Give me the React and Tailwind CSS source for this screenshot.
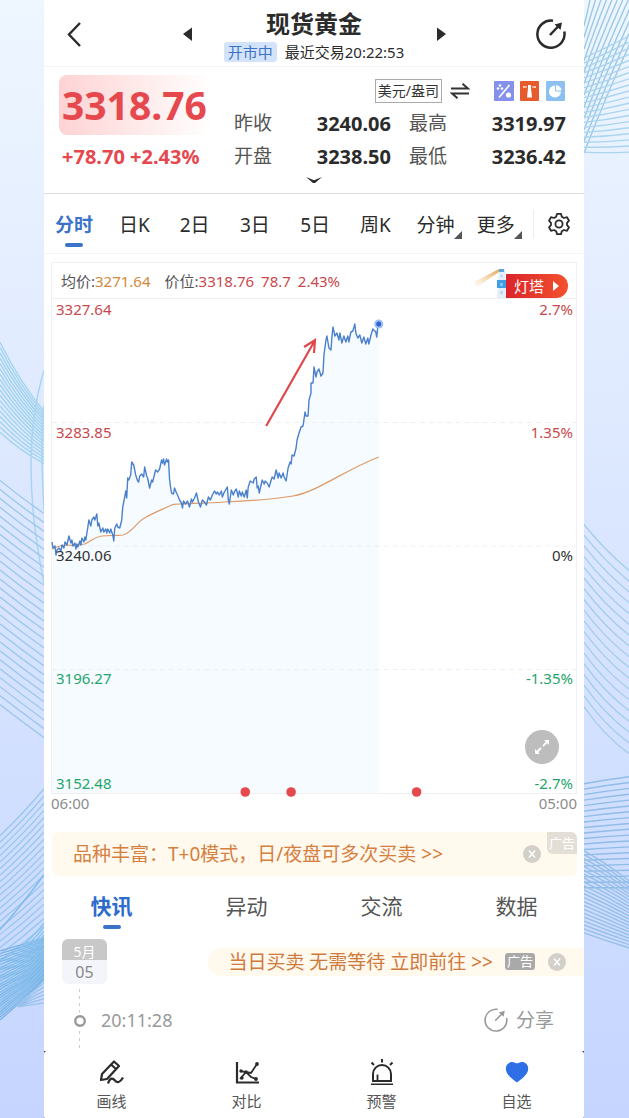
import React, { useState } from 'react';

const PERIODS = ['分时', '日K', '2日', '3日', '5日', '周K', '分钟', '更多'];
const MENU_PERIODS = ['分钟', '更多'];
const FEED_TABS = ['快讯', '异动', '交流', '数据'];

const LEVELS = [
  { price: '3327.64', percent: '2.7%', color: 'text-[#c9484c]' },
  { price: '3283.85', percent: '1.35%', color: 'text-[#c9484c]' },
  { price: '3240.06', percent: '0%', color: 'text-[#333]' },
  { price: '3196.27', percent: '-1.35%', color: 'text-[#1fa56b]' },
];

const PRICE_LINE =
  '0,243 1,249 3,247 4,256 5,251 7,249 9,252 10,246 12,249 13,243 15,246 17,237 19,244 20,241 21,247 23,244 24,250 25,245 26,248 28,242 29,246 30,239 32,243 33,238 34,241 35,234 36,228 37,221 39,227 40,221 42,218 43,221 45,215 46,227 47,224 49,233 51,229 52,233 54,230 55,234 56,230 58,234 59,230 61,236 62,242 63,229 65,225 66,228 68,229 70,221 71,208 73,198 74,192 75,199 76,179 77,181 79,176 80,163 82,166 84,176 86,182 87,183 88,177 90,175 92,178 93,168 95,177 96,179 98,189 100,181 101,183 104,171 106,173 108,170 110,161 111,164 112,160 113,166 115,160 116,163 117,161 118,180 119,188 120,194 122,195 123,189 125,194 126,196 128,201 130,204 131,209 132,202 134,205 136,202 138,208 140,200 141,203 143,199 145,194 147,203 149,208 151,201 153,203 155,206 157,198 159,201 161,196 163,192 165,195 166,193 168,196 170,192 171,198 173,193 176,188 177,201 178,205 180,191 182,196 183,193 185,190 187,198 188,192 190,197 191,193 193,198 195,191 196,199 197,188 199,182 202,184 203,180 205,178 206,189 207,187 208,194 211,181 213,185 214,182 216,184 218,188 220,181 221,178 223,180 225,171 227,179 228,174 230,179 232,174 233,178 235,182 237,169 239,163 240,165 241,156 243,157 245,149 246,141 248,134 250,128 252,127 254,113 255,117 257,117 258,101 260,94 260,84 262,84 263,68 265,78 266,73 268,70 270,77 272,74 273,56 275,41 276,37 278,49 280,51 281,38 282,28 284,37 286,34 288,41 289,34 291,44 293,37 295,43 297,37 298,43 300,33 302,32 304,25 305,34 307,39 309,36 311,44 313,38 315,45 317,39 318,45 320,37 322,30 325,33 326,38 327,28 328,25';

const AVERAGE_LINE =
  'M0 250C5 248 8 246 14 246C22 247 28 246 33 245C40 242 42 238 50 237S64 237 71 236C80 234 84 224 93 219C103 213 112 210 120 206C126 204 150 205 173 203C197 202 222 200 242 197C266 193 292 172 328 158';

// n strokes blended between a first and a last quadratic curve
const fan = (first, last, n) =>
  Array.from({ length: n }, (_, i) => {
    const t = n > 1 ? i / (n - 1) : 0;
    const [x1, y1, cx, cy, x2, y2] = first.map((v, k) => v + (last[k] - v) * t);
    return `M${x1} ${y1}Q${cx} ${cy} ${x2} ${y2}`;
  }).join('');

const WAVES = [
  { d: fan([0, 342, 20, 382, 44, 411], [0, 432, 22, 452, 44, 463], 18), color: '#a3d4ee' },
  { d: 'M44 370Q18 455 44 583M44 405Q40 440 44 510', color: '#a6d5ef' },
  { d: fan([0, 480, 22, 498, 44, 513], [0, 704, 22, 721, 44, 737], 26), color: '#a0c8ea' },
  { d: fan([0, 835, 22, 814, 44, 788], [0, 960, 22, 944, 44, 925], 20), color: '#9ac8ee' },
  { d: fan([0, 950, 22, 944, 44, 937], [0, 1019, 22, 1001, 44, 979], 26), color: '#7db3e6' },
  { d: fan([0, 960, 22, 950, 44, 922], [0, 1012, 22, 998, 44, 975], 14), color: '#88c4ee' },
  { d: fan([18, 1004, 30, 992, 44, 982], [18, 1006, 30, 1004, 44, 1002], 6), color: '#98c1ec' },
  { d: 'M0 929Q22 904 44 874', color: '#80bae8' },
  { d: fan([590, 0, 587, 14, 584, 26], [650, 0, 612, 80, 584, 153], 12), color: '#9cc8e6' },
  { d: fan([584, 58, 606, 48, 629, 36], [584, 152, 606, 153, 629, 152], 20), color: '#abd5ee' },
  { d: fan([584, 524, 604, 549, 629, 570], [584, 706, 604, 735, 629, 753], 18), color: '#a6ceeb' },
  { d: fan([584, 783, 606, 779, 629, 776], [584, 887, 606, 887, 629, 887], 20), color: '#90bce6' },
  { d: fan([584, 850, 606, 862, 629, 880], [584, 932, 606, 940, 629, 947], 22), color: '#96bfe8' },
];

const Backdrop = () => (
  <svg
    className="absolute inset-0 w-full h-full"
    viewBox="0 0 629 1118"
    preserveAspectRatio="none"
    fill="none"
    aria-hidden="true"
  >
    {WAVES.map((wave, i) => (
      <path key={i} d={wave.d} stroke={wave.color} strokeWidth="1.4" />
    ))}
  </svg>
);

const ShareIcon = ({ className, strokeWidth = 2 }) => (
  <svg className={className} viewBox="0 0 30 30" fill="none" stroke="currentColor" strokeWidth={strokeWidth}>
    <path d="M17 1.7A13.6 13.6 0 1 0 28.3 12.5" />
    <path d="M14 16L23 6.5" />
    <path d="M18.5 5.5L26 3.5L24.5 11Z" fill="currentColor" stroke="none" />
  </svg>
);

const CloseIcon = ({ className }) => (
  <svg className={className} viewBox="0 0 18 18" fill="none">
    <circle cx="9" cy="9" r="9" fill="currentColor" />
    <path d="M6 5.5L12 12.5M12 5.5L6 12.5" stroke="#fff" strokeWidth="1.4" />
  </svg>
);

const Header = () => (
  <header className="grid grid-cols-[1fr_auto_1fr] border-b border-[#f3f3f3] pt-2 pb-1 text-[#2b2b2b]">
    <div className="flex items-center justify-between pl-5 pr-8 pb-[2px]">
      <button type="button" aria-label="返回">
        <svg className="w-5 h-7" viewBox="0 0 20 28" fill="none" stroke="currentColor" strokeWidth="2.4">
          <path d="M16 3L5 14.5L16 26" />
        </svg>
      </button>
      <button type="button" aria-label="上一个">
        <svg className="w-[10px] h-4" viewBox="0 0 10 16" fill="currentColor">
          <path d="M10 1.5V15L1 8Z" />
        </svg>
      </button>
    </div>
    <div className="text-center">
      <h1 className="text-2xl leading-8 font-bold">现货黄金</h1>
      <div className="flex items-center gap-2 mt-[2px] text-[15px] leading-5">
        <span className="rounded-[3px] bg-[#d3e3fa] px-1 text-[#3b73c9]">开市中</span>
        <span>最近交易20:22:53</span>
      </div>
    </div>
    <div className="flex items-center justify-between pl-8 pr-[18px] pb-[2px]">
      <button type="button" aria-label="下一个">
        <svg className="w-[10px] h-4" viewBox="0 0 10 16" fill="currentColor">
          <path d="M1 1.5V15L10 8Z" />
        </svg>
      </button>
      <button type="button" aria-label="分享行情">
        <ShareIcon className="w-[30px] h-[30px]" strokeWidth={2.5} />
      </button>
    </div>
  </header>
);

const StatList = ({ rows }) => (
  <dl className="flex-1">
    {rows.map(([label, value]) => (
      <div key={label} className="flex items-center justify-between leading-[33px]">
        <dt className="text-[19px] text-[#555]">{label}</dt>
        <dd className="text-xl leading-[33px] font-bold text-[#2b2b2b]">{value}</dd>
      </div>
    ))}
  </dl>
);

const Quote = () => (
  <section className="border-b border-[#dcdfe2]">
    <div className="flex pt-2 pl-[15px] pr-[18px]">
      <div className="w-[154px] mr-[21px] text-[#e5484d] font-bold">
        <p className="rounded-lg bg-linear-to-r from-[#fdd3d4] to-white pl-[3px] text-[39px] leading-[60px]">
          3318.76
        </p>
        <p className="mt-[10px] pl-[3px] text-xl leading-6 whitespace-nowrap">+78.70 +2.43%</p>
      </div>
      <div className="flex-1">
        <div className="flex h-8 items-center justify-end">
          <button type="button" className="border border-[#aaa] px-[2px] text-sm leading-[22px] text-[#333]">
            美元/盎司
          </button>
          <svg className="ml-2 w-5 h-4" viewBox="0 0 20 16" fill="none" stroke="#333" strokeWidth="2">
            <path d="M1 5.5H18L12.5 0.8M19 10.500H2L7.5 15.2" />
          </svg>
          <div className="ml-6 flex gap-[6px]">
            <svg className="w-5 h-5" viewBox="0 0 20 20">
              <rect width="20" height="20" rx="1" fill="#8590ea" />
              <path d="M5 16.5L15.5 4" stroke="#fff" strokeWidth="1.6" />
              <circle cx="14.5" cy="14" r="2.6" fill="#fff" />
              <circle cx="6" cy="4.5" r="1.3" fill="#fff" />
              <circle cx="4" cy="7.5" r="1.3" fill="#fff" />
              <circle cx="8" cy="7.5" r="1.3" fill="#fff" />
            </svg>
            <svg className="w-5 h-5" viewBox="0 0 20 20">
              <rect width="19" height="20" rx="1" fill="#e75a2c" />
              <path d="M8 4H11V7L12 16.5H7L8 7Z" fill="#fff" />
              <path d="M3 5L7 5.5V6.5L3 7ZM16 5L12 5.5V6.5L16 7Z" fill="#fbd9cc" />
            </svg>
            <svg className="w-5 h-5" viewBox="0 0 20 20">
              <rect width="19" height="20" rx="1" fill="#8cc0f0" />
              <circle cx="9" cy="10.5" r="6" fill="#fff" />
              <path d="M9.5 10V3.5A6.5 6.5 0 0 1 16 10Z" fill="#fff" stroke="#8cc0f0" strokeWidth="1" />
            </svg>
          </div>
        </div>
        <div className="flex gap-[18px]">
          <StatList rows={[['昨收', '3240.06'], ['开盘', '3238.50']]} />
          <StatList rows={[['最高', '3319.97'], ['最低', '3236.42']]} />
        </div>
      </div>
    </div>
    <button type="button" aria-label="展开" className="mx-auto flex h-5 items-start pt-1">
      <svg className="w-4 h-[6px]" viewBox="0 0 16 6" fill="#2b2b2b">
        <path d="M0 0L8 3.2L16 0L9 6H7Z" />
      </svg>
    </button>
  </section>
);

const PeriodTabs = () => {
  const [active, setActive] = useState('分时');

  return (
    <nav className="flex border-b border-[#f3f3f3] text-[19px] leading-7 text-[#2b2b2b]">
      {PERIODS.map((period) => (
        <button
          key={period}
          type="button"
          onClick={() => setActive(period)}
          className={`relative flex flex-1 flex-col items-center pt-[17px] pb-[6px] ${
            period === active ? 'font-bold text-[#3b73c9]' : ''
          }`}
        >
          <span>{period}</span>
          <span className={`mt-1 h-1 w-[18px] rounded-full ${period === active ? 'bg-[#3b73c9]' : ''}`} />
          {MENU_PERIODS.includes(period) && (
            <svg className="absolute right-1 bottom-[14px] w-2 h-2" viewBox="0 0 8 8" fill="#555">
              <path d="M8 0V8H0Z" />
            </svg>
          )}
        </button>
      ))}
      <div className="ml-[7px] flex items-center">
        <span className="h-7 w-px bg-[#eee]" />
        <button type="button" aria-label="设置" className="pl-[13px] pr-[13px]">
          <svg
            className="w-6 h-6"
            viewBox="0 0 24 24"
            fill="none"
            stroke="currentColor"
            strokeWidth="1.8"
            strokeLinejoin="round"
          >
            <path d="M10 1.8H14L14.8 4.7L17 6L20 5.2L22 8.7L20 10.9V13.1L22 15.3L20 18.8L17 18L14.8 19.3L14 22.2H10L9.2 19.3L7 18L4 18.8L2 15.3L4 13.1V10.9L2 8.7L4 5.2L7 6L9.2 4.7Z" />
            <circle cx="12" cy="12" r="3.6" />
          </svg>
        </button>
      </div>
    </nav>
  );
};

const Beacon = () => (
  <a href="#beacon" className="ml-auto mr-2 flex items-end pt-[5px] text-[15px] text-white">
    <svg className="w-8 h-[30px]" viewBox="0 0 32 30" fill="none">
      <defs>
        <linearGradient id="beam" x1="0" y1="1" x2="1" y2="0">
          <stop offset="0" stopColor="#fbe3c2" stopOpacity="0.2" />
          <stop offset="1" stopColor="#e0a04c" />
        </linearGradient>
      </defs>
      <path d="M0 14L25 1V4L3 19Z" fill="url(#beam)" />
      <path d="M25 1H31L32 30H23Z" fill="#e3eef9" />
      <path d="M25 1H30V4H25Z" fill="#5aa5dc" />
      <path d="M23 12H32V20H23Z" fill="#3f9fe6" />
      <path d="M27.500 7V9M27.500 15V18M27.500 23V26" stroke="#a9d3f4" strokeWidth="2" />
    </svg>
    <span className="flex h-6 items-center gap-[9px] rounded-r-full bg-linear-to-r from-[#d9232b] to-[#f4502e] pl-2 pr-[9px]">
      灯塔
      <svg className="w-[6px] h-[10px]" viewBox="0 0 6 10" fill="#fff">
        <path d="M0 0L6 5L0 10Z" />
      </svg>
    </span>
  </a>
);

const Chart = () => (
  <section className="mx-[7px] mt-2 text-[15px] leading-5">
    <div className="flex h-[37px] items-center border border-[#f0f0f0] pl-[9px] text-[#555]">
      <span>
        均价:<span className="text-[#d08a3c]">3271.64</span>
      </span>
      <span className="ml-[14px]">
        价位:<span className="text-[#c9484c]">3318.76</span>
      </span>
      <span className="ml-[7px] text-[#c9484c]">78.7</span>
      <span className="ml-[7px] text-[#c9484c]">2.43%</span>
      <Beacon />
    </div>
    <div className="relative border-x border-b border-[#f0f0f0]">
      <svg
        className="absolute inset-0 w-full h-full overflow-visible"
        viewBox="0 0 526 494"
        preserveAspectRatio="none"
        fill="none"
      >
        <polygon points={`0,494 ${PRICE_LINE} 328,494`} fill="#f6fbff" />
        <path d="M0 123.500H526M0 247H526M0 370.500H526" stroke="#efefef" strokeDasharray="5 4" />
        <path d={AVERAGE_LINE} stroke="#dc9a68" strokeWidth="1.2" />
        <polyline points={PRICE_LINE} stroke="#4a80cc" strokeWidth="1.4" strokeLinejoin="round" />
        <circle cx="328" cy="25" r="4.500" fill="#9dbdf3" />
        <circle cx="328" cy="25" r="2.500" fill="#2f63cf" />
        <path d="M215 127L263 43M253 48L264 41L263 54" stroke="#e0474c" strokeWidth="2.2" />
        <circle cx="194" cy="493" r="4.800" fill="#e5484d" />
        <circle cx="240" cy="493" r="4.800" fill="#e5484d" />
        <circle cx="366" cy="493" r="4.800" fill="#e5484d" />
      </svg>
      <div className="relative pb-[2px]">
        {LEVELS.map((level) => (
          <div key={level.price} className={`flex h-[123px] justify-between px-1 pr-[3px] ${level.color}`}>
            <span>{level.price}</span>
            <span>{level.percent}</span>
          </div>
        ))}
        <button
          type="button"
          aria-label="全屏"
          className="absolute right-[17px] bottom-[29px] flex h-[34px] w-[34px] items-center justify-center rounded-full bg-[#bdbdbd]"
        >
          <svg className="w-4 h-4" viewBox="0 0 16 16" fill="none" stroke="#fff" strokeWidth="1.8">
            <path d="M9 7L13 3M7 9L3 13" />
            <path d="M10 1H15V6ZM1 10V15H6Z" fill="#fff" stroke="none" />
          </svg>
        </button>
        <div className="absolute inset-x-0 bottom-0 flex justify-between pl-1 pr-[3px] text-[#1fa56b]">
          <span>3152.48</span>
          <span>-2.7%</span>
        </div>
      </div>
    </div>
    <div className="flex justify-between leading-[18px] text-[#8c8c8c]">
      <span>06:00</span>
      <span>05:00</span>
    </div>
  </section>
);

const Banner = () => (
  <aside className="relative mx-2 mr-[7px] mt-5 flex items-center rounded-md bg-[#fff9ee] pl-[21px] pr-9">
    <a href="#trade" className="flex-1 text-[19px] leading-[44px] whitespace-nowrap text-[#d5803f]">
      品种丰富：T+0模式，日/夜盘可多次买卖 &gt;&gt;
    </a>
    <button type="button" aria-label="关闭广告" className="text-[#d3d0ca]">
      <CloseIcon className="w-[18px] h-[18px]" />
    </button>
    <span className="absolute top-0 right-0 rounded-tr-md rounded-bl-md bg-[#e4dfd6] px-[2px] text-[13px] leading-[22px] text-white">
      广告
    </span>
  </aside>
);

const FeedTabs = () => {
  const [active, setActive] = useState('快讯');

  return (
    <nav className="grid grid-cols-4 pt-[15px] text-[21px] leading-[30px] text-[#555]">
      {FEED_TABS.map((tab) => (
        <button
          key={tab}
          type="button"
          onClick={() => setActive(tab)}
          className={`flex flex-col items-center ${tab === active ? 'font-bold text-[#2f6bcb]' : ''}`}
        >
          {tab}
          <span className={`mt-1 h-1 w-[18px] rounded-full ${tab === active ? 'bg-[#3b73c9]' : ''}`} />
        </button>
      ))}
    </nav>
  );
};

const Feed = () => (
  <section className="pt-[10px]">
    <div className="flex items-center justify-between pl-[18px]">
      <div className="w-[45px] overflow-hidden rounded-md text-center">
        <p className="bg-[#c8c8c8] pt-1 text-sm leading-[17px] text-white">5月</p>
        <p className="bg-[#f4f5fb] text-base leading-6 text-[#888]">05</p>
      </div>
      <aside className="flex items-center rounded-l-full bg-[#fff9ee] pl-5 pr-[18px]">
        <a href="#buy" className="text-[19px] leading-7 whitespace-nowrap text-[#cf7a3c]">
          当日买卖 无需等待 立即前往 &gt;&gt;
        </a>
        <span className="ml-3 rounded-[3px] bg-[#a9a9a9] px-[2px] text-[13px] leading-[17px] text-white">广告</span>
        <button type="button" aria-label="关闭" className="ml-[13px] text-[#d3d0ca]">
          <CloseIcon className="w-[18px] h-[18px]" />
        </button>
      </aside>
    </div>
    <div className="flex items-center pl-[29px] pr-[30px] text-[#999]">
      <svg className="w-[14px] h-[67px]" viewBox="0 0 14 67" fill="none">
        <path d="M6.500 5V67" stroke="#ccc" strokeDasharray="3 4" />
        <circle cx="7" cy="37" r="4.800" fill="#fff" stroke="#999" strokeWidth="2.4" />
      </svg>
      <time className="ml-[14px] pt-[5px] text-lg leading-6">20:11:28</time>
      <button type="button" className="ml-auto flex items-center gap-2 pt-[5px] text-[19px] leading-6">
        <ShareIcon className="w-6 h-6" strokeWidth={2} />
        分享
      </button>
    </div>
  </section>
);

const ACTIONS = [
  {
    label: '画线',
    icon: (
      <g fill="none" stroke="#2b2b2b" strokeWidth="2.2" strokeLinejoin="round">
        <path d="M2 21L3 15L15 2.500L20 7L8 20L2 21ZM12 5.500L17 10" />
        <path d="M9 24.500C11 18 14 19 16 21.500S21 24 24 18.500" />
      </g>
    ),
  },
  {
    label: '对比',
    icon: (
      <g fill="none" stroke="#2b2b2b" strokeWidth="1.8">
        <path d="M3 3V23.500H25" strokeWidth="2.2" />
        <path d="M6 20L12 13L17 14L23 5M6 12L12 13L17 18L22 20" />
        <g fill="#2b2b2b" stroke="none">
          <circle cx="23" cy="5" r="1.900" />
          <circle cx="8" cy="19" r="1.700" />
          <circle cx="7" cy="12" r="1.700" />
          <circle cx="12" cy="13" r="1.700" />
          <circle cx="22" cy="20" r="1.900" />
        </g>
      </g>
    ),
  },
  {
    label: '预警',
    icon: (
      <g fill="none" stroke="#2b2b2b" strokeWidth="2">
        <path d="M4 22V15A9 9 0 0 1 22 15V22ZM2 25.500H24M13 0V3.500M2.500 3.500L5 6M23.500 3.500L21 6" />
        <path d="M8.500 15.500V21.500" strokeWidth="1.800" />
      </g>
    ),
  },
  {
    label: '自选',
    icon: (
      <path
        d="M13 23.500C8 19.500 1.800 15.500 1.800 9.500C1.800 4.500 7 1.500 11 3.800Q13 4.800 15 3.800C19 1.500 24.200 4.500 24.200 9.500C24.200 15.500 18 19.500 13 23.500Z"
        fill="#2f6fe6"
      />
    ),
  },
];

const ActionBar = () => (
  <footer className="bg-[#1b2430]">
    <nav className="grid grid-cols-4 rounded-[3px] bg-white pt-2 pb-2">
      {ACTIONS.map(({ label, icon }) => (
        <button
          key={label}
          type="button"
          className="flex flex-col items-center gap-[6px] text-[15px] leading-5 text-[#555]"
        >
          <svg className="w-[26px] h-[26px]" viewBox="0 0 26 26">
            {icon}
          </svg>
          {label}
        </button>
      ))}
    </nav>
  </footer>
);

const App = () => {
  return (
    <div
      lang="zh-CN"
      className="relative min-h-screen bg-linear-to-b from-[#eef6ff] to-[#c5d5ff] font-['Noto_Sans','Noto_Sans_CJK_SC',sans-serif]"
    >
      <Backdrop />
      <main className="relative ml-11 mr-[45px] bg-white">
        <Header />
        <Quote />
        <PeriodTabs />
        <Chart />
        <Banner />
        <FeedTabs />
        <Feed />
        <ActionBar />
      </main>
    </div>
  );
};

export default App;
